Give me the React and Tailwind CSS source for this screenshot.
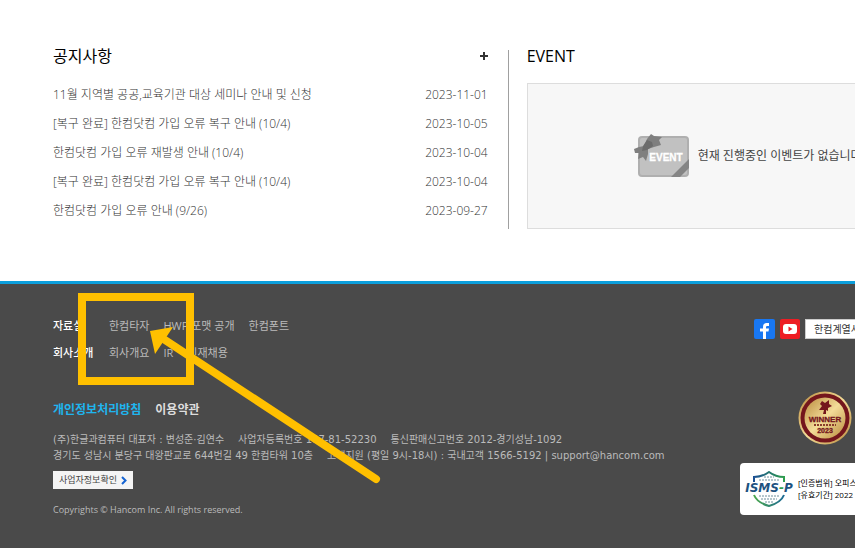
import React from "react";

const notices = [
  { title: "11월 지역별 공공,교육기관 대상 세미나 안내 및 신청", date: "2023-11-01" },
  { title: "[복구 완료] 한컴닷컴 가입 오류 복구 안내 (10/4)", date: "2023-10-05" },
  { title: "한컴닷컴 가입 오류 재발생 안내 (10/4)", date: "2023-10-04" },
  { title: "[복구 완료] 한컴닷컴 가입 오류 복구 안내 (10/4)", date: "2023-10-04" },
  { title: "한컴닷컴 가입 오류 안내 (9/26)", date: "2023-09-27" },
];

const footerMenus = [
  { title: "자료실", links: ["한컴타자", "HWP 포맷 공개", "한컴폰트"] },
  { title: "회사소개", links: ["회사개요", "IR", "인재채용"] },
];

const EventCardIcon = () => (
  <svg width="56" height="44" viewBox="0 0 56 44" className="shrink-0" aria-hidden="true">
    <defs>
      <clipPath id="card">
        <rect x="4" y="2" width="51" height="41" rx="4" />
      </clipPath>
    </defs>
    <rect x="4" y="2" width="51" height="41" rx="4" fill="#afafaf" />
    <rect x="6" y="4" width="47" height="37" rx="2" fill="#c1c1c1" />
    <path d="M37 43 L55 25 V34 L46 43 Z" fill="#858585" clipPath="url(#card)" />
    <path d="M17 0 L20 2 L28 3 L25 6 L27 11 L20 13 L14 15 L14 20 L12 27 L9 23 L4 25 L5 19 L1 19 L0 15 L5 13 L10 12 L13 5 Z" fill="#7f7f7f" />
    <path d="M13 6 L18 8 L19 12 L13 16 L8 17 L9 12 Z" fill="#6c6c6c" />
    <text x="32" y="27" textAnchor="middle" fontSize="10" fontWeight="700" fill="#fff" stroke="#fff" strokeWidth="0.3" fontFamily="Liberation Sans, sans-serif">EVENT</text>
  </svg>
);

const FacebookIcon = () => (
  <svg width="21" height="20" viewBox="0 0 21 20" aria-hidden="true">
    <rect width="21" height="20" rx="2" fill="#1877f2" />
    <path d="M9 20 V12.500 H6 V9.500 H9 V8 C9 5 10.500 4 12.500 4 H15 V7 H13.500 C12.500 7 12 7.300 12 8.200 V9.500 H15 L14.500 12.500 H12 V20 Z" fill="#fff" />
  </svg>
);

const YoutubeIcon = () => (
  <svg width="20" height="20" viewBox="0 0 20 20" aria-hidden="true">
    <rect width="20" height="20" rx="2" fill="#ed1d24" />
    <rect x="3" y="5" width="14" height="10" rx="3" fill="#fff" />
    <path d="M8.500 7.500 V12.500 L12.500 10 Z" fill="#ed1d24" />
  </svg>
);

const WinnerBadge = () => (
  <svg width="54" height="54" viewBox="0 0 54 54" role="img" aria-label="WINNER 2023">
    <defs>
      <linearGradient id="gold" x1="0" y1="0" x2="1" y2="1">
        <stop offset="0" stopColor="#b98a3c" />
        <stop offset="0.5" stopColor="#f3dc98" />
        <stop offset="1" stopColor="#b98a3c" />
      </linearGradient>
    </defs>
    <circle cx="27" cy="27" r="26.500" fill="url(#gold)" />
    <circle cx="27" cy="27" r="24.500" fill="#74161c" />
    <circle cx="27" cy="27" r="20.500" fill="url(#gold)" />
    <path d="M24 10 L27 12 L31 9 L31 13 L34 15 L30 17 L30 20 L28 19 L28 23 L25 23 L26 19 L21 19 L24 15 L22 13 Z" fill="#74161c" />
    <g fill="#74161c" stroke="#74161c" strokeWidth="0.3" fontFamily="Liberation Sans, sans-serif" fontWeight="700" textAnchor="middle">
      <text x="27" y="31" fontSize="8">WINNER</text>
      <text x="27" y="42" fontSize="7">2023</text>
    </g>
    <path d="M16 34 H38" stroke="#8a3d2c" strokeWidth="2" strokeDasharray="2 1" />
  </svg>
);

const IsmsLogo = () => (
  <svg width="50" height="36" viewBox="0 0 50 36" className="shrink-0" role="img" aria-label="ISMS-P">
    <defs>
      <linearGradient id="isms" x1="0" y1="0" x2="1" y2="0">
        <stop offset="0" stopColor="#1b4f93" />
        <stop offset="1" stopColor="#2e9e4d" />
      </linearGradient>
      <linearGradient id="ismsLower" x1="0" y1="0" x2="1" y2="0">
        <stop offset="0" stopColor="#4aa84a" />
        <stop offset="1" stopColor="#1d6a94" />
      </linearGradient>
    </defs>
    <path d="M10 11 V6 C17 6 21 4 25 1 C29 4 33 6 40 6 V11" fill="none" stroke="url(#isms)" strokeWidth="2" />
    <path d="M10 24 C12 29 18 33 25 35 C32 33 38 29 40 24" fill="none" stroke="url(#ismsLower)" strokeWidth="2" />
    <path d="M20 6 H30 M15 9 H35 M15 25 H35 M17 28 H33 M21 31 H29" stroke="#6f909c" strokeDasharray="2 1" />
    <text x="25" y="21" textAnchor="middle" fontSize="12" fontWeight="700" fontStyle="italic" fill="#1d5280" fontFamily="DejaVu Sans, sans-serif">
      ISMS<tspan fill="#2e9e4d">-</tspan>P
    </text>
  </svg>
);

// Highlight frame and arrow drawn over the footer menu
const Annotation = () => (
  <svg width="400" height="500" viewBox="0 0 400 500" className="pointer-events-none absolute top-0 left-0" aria-hidden="true">
    <rect x="82" y="297" width="108" height="84" fill="none" stroke="#ffc000" strokeWidth="8" />
    <path d="M165 340 L376 479" stroke="#ffc000" strokeWidth="8" strokeLinecap="round" />
    <path d="M150 331 L173 327 L155 354 Z" fill="#ffc000" />
  </svg>
);

export default function App() {
  return (
    <div className="relative overflow-hidden bg-white font-['Open_Sans','Noto_Sans_CJK_KR',sans-serif] whitespace-nowrap">
      <main className="grid grid-cols-[25fr_19fr] pt-[50px] pb-[52px] pl-[53px]">
        <section className="min-w-0 border-r border-[#a0a0a0] pr-5">
          <div className="flex h-3 items-center justify-between">
            <h2 className="text-base text-black">공지사항</h2>
            <button type="button" aria-label="더보기">
              <svg width="8" height="8" viewBox="0 0 8 8" aria-hidden="true">
                <path d="M4 0 V8 M0 4 H8" stroke="#333" strokeWidth="2" />
              </svg>
            </button>
          </div>
          <ul className="mt-[18px] text-xs leading-[29px] font-light text-[#333]">
            {notices.map((notice, idx) => (
              <li key={idx} className="flex justify-between">
                <a href="#">{notice.title}</a>
                <span>{notice.date}</span>
              </li>
            ))}
          </ul>
        </section>
        <section className="min-w-0 pl-[18px]">
          <div className="flex h-3 items-center">
            <h2 className="text-base text-black">EVENT</h2>
          </div>
          <div className="mt-[21px] flex h-[146px] items-center gap-2 overflow-hidden border border-r-0 border-[#ddd] bg-[#f7f7f7] pl-[106px]">
            <EventCardIcon />
            <p className="text-xs text-[#444]">현재 진행중인 이벤트가 없습니다</p>
          </div>
        </section>
      </main>

      <footer className="flex justify-between border-t-[3px] border-[#0c9fdc] bg-[#4a4a4a] pb-[30px] pl-[53px] text-[#bbb]">
        <div>
          <nav className="pt-7 text-[11px] leading-[27px]">
            {footerMenus.map((menu) => (
              <div key={menu.title} className="flex">
                <strong className="w-14 font-medium text-white">{menu.title}</strong>
                <ul className="flex gap-3.5">
                  {menu.links.map((link) => (
                    <li key={link}>
                      <a href="#">{link}</a>
                    </li>
                  ))}
                </ul>
              </div>
            ))}
          </nav>
          <div className="mt-8 flex gap-3.5 text-xs leading-[24px] font-bold">
            <a href="#" className="text-[#1fb5ee]">개인정보처리방침</a>
            <a href="#" className="text-[#ddd]">이용약관</a>
          </div>
          <address className="mt-2.5 font-['DejaVu_Sans','Noto_Sans_CJK_KR',sans-serif] text-[10px] leading-4 not-italic">
            <p className="flex gap-3.5">
              <span>(주)한글과컴퓨터 대표자 : 변성준·김연수</span>
              <span>사업자등록번호 107-81-52230</span>
              <span>통신판매신고번호 2012-경기성남-1092</span>
            </p>
            <p className="flex gap-3.5">
              <span>경기도 성남시 분당구 대왕판교로 644번길 49 한컴타워 10층</span>
              <span>고객지원 (평일 9시-18시) : 국내고객 1566-5192 | support@hancom.com</span>
            </p>
          </address>
          <button type="button" className="mt-[7px] flex h-[18px] items-center gap-1 bg-[#f4f4f4] px-1.5 text-[9px] text-[#444]">
            사업자정보확인
            <svg width="6" height="9" viewBox="0 0 6 9" aria-hidden="true">
              <path d="M1 1 L4.500 4.500 L1 8" fill="none" stroke="#1463d2" strokeWidth="2" />
            </svg>
          </button>
          <p className="mt-[13px] text-[9px] leading-4">Copyrights © Hancom Inc. All rights reserved.</p>
        </div>

        <div className="w-[115px] shrink-0 overflow-hidden pt-[35px]">
          <div className="flex gap-[5px] pl-3.5">
            <a href="#" aria-label="Facebook" className="shrink-0">
              <FacebookIcon />
            </a>
            <a href="#" aria-label="YouTube" className="shrink-0">
              <YoutubeIcon />
            </a>
            <button type="button" className="h-5 shrink-0 border border-[#ccc] bg-white px-2 text-[10px] text-[#333]">한컴계열사</button>
          </div>
          <div className="mt-[52px] flex justify-end pr-[3px]">
            <WinnerBadge />
          </div>
          <div className="mt-[18px] flex h-[52px] w-40 items-center gap-1 rounded-sm bg-white pl-1 text-[8px] leading-3 text-black">
            <IsmsLogo />
            <p>
              [인증범위] 오피스
              <br />
              [유효기간] 2022
            </p>
          </div>
        </div>
      </footer>
      <Annotation />
    </div>
  );
}
